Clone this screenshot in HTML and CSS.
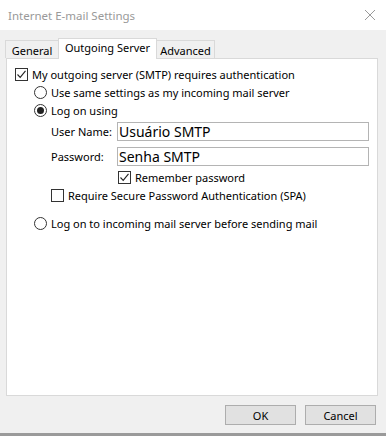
FILE: index.html
```html
<!DOCTYPE html>
<html>
<head>
<meta charset="utf-8">
<link rel="stylesheet" href="styles.css">
</head>
<body>
<div class="window">
  <div class="titlebar">
    <span class="title">Internet E-mail Settings</span>
    <svg class="close" width="12" height="12" viewBox="0 0 12 12"><path d="M1 1 L11 11 M11 1 L1 11" stroke="#9a9a9a" stroke-width="1" fill="none"/></svg>
  </div>
  <div class="body">
    <div class="tabs">
      <div class="tab t-general">General</div>
      <div class="tab active">Outgoing Server</div>
      <div class="tab t-adv">Advanced</div>
    </div>
    <div class="panel">
      <div class="row lvl0">
        <span class="check on"><svg width="11" height="11" viewBox="0 0 11 11"><path d="M1.5 5.5 L4.2 8.3 L9.5 1.8" stroke="#222" stroke-width="1.1" fill="none"/></svg></span>
        <span>My outgoing server (SMTP) requires authentication</span>
      </div>
      <div class="row lvl1">
        <span class="radio"></span>
        <span>Use same settings as my incoming mail server</span>
      </div>
      <div class="row lvl1">
        <span class="radio on"></span>
        <span>Log on using</span>
      </div>
      <div class="field f1">
        <label>User Name:</label>
        <div class="input">Usuário SMTP</div>
      </div>
      <div class="field f2">
        <label>Password:</label>
        <div class="input">Senha SMTP</div>
      </div>
      <div class="row remember">
        <span class="check on"><svg width="11" height="11" viewBox="0 0 11 11"><path d="M1.5 5.5 L4.2 8.3 L9.5 1.8" stroke="#222" stroke-width="1.1" fill="none"/></svg></span>
        <span>Remember password</span>
      </div>
      <div class="row spa">
        <span class="check"></span>
        <span>Require Secure Password Authentication (SPA)</span>
      </div>
      <div class="row lvl1 last">
        <span class="radio"></span>
        <span>Log on to incoming mail server before sending mail</span>
      </div>
    </div>
    <div class="buttons">
      <div class="btn">OK</div>
      <div class="btn">Cancel</div>
    </div>
    <div class="strip"></div>
  </div>
</div>
</body>
</html>
```
FILE: styles.css
```css
html, body {
  margin: 0;
  padding: 0;
}
body {
  width: 386px;
  height: 436px;
  overflow: hidden;
  font-family: "Noto Sans", "DejaVu Sans", sans-serif;
  font-size: 11px;
  color: #000;
  background: #f0f0f0;
}
.window {
  width: 386px;
  height: 436px;
  display: flex;
  flex-direction: column;
}
.titlebar {
  height: 30px;
  background: #fff;
  display: flex;
  align-items: center;
  justify-content: space-between;
  padding: 0 10px 0 8px;
  box-sizing: border-box;
}
.title {
  color: #999;
  font-size: 11.5px;
}
.close {
  display: block;
}
.body {
  flex: 1;
  display: flex;
  flex-direction: column;
  background: #f0f0f0;
}
.tabs {
  display: flex;
  align-items: flex-end;
  padding: 7px 0 0 5px;
  height: 28px;
  box-sizing: border-box;
  position: relative;
  z-index: 1;
}
.tab {
  height: 18px;
  line-height: 19px;
  border: 1px solid #d9d9d9;
  border-bottom: none;
  background: #f0f0f0;
  box-sizing: border-box;
  text-align: center;
}
.t-general {
  width: 53px;
  border-right: none;
}
.t-adv {
  width: 58px;
  border-left: none;
}
.tab.active {
  width: 99px;
  height: 21px;
  line-height: 18px;
  background: #fff;
  margin-bottom: -1px;
}
.panel {
  margin: 0 8px 0 6px;
  height: 338px;
  background: #fff;
  border: 1px solid #d9d9d9;
  box-sizing: border-box;
  padding-top: 9px;
}
.row {
  display: flex;
  align-items: center;
  height: 13px;
  gap: 4px;
  white-space: nowrap;
}
.lvl0 { padding-left: 8px; }
.lvl1 { padding-left: 27px; margin-top: 5px; }
.check {
  width: 13px;
  height: 13px;
  box-sizing: border-box;
  border: 1px solid #333;
  background: #fff;
  display: flex;
  align-items: center;
  justify-content: center;
  flex: none;
}
.check svg { display: block; }
.radio {
  width: 13px;
  height: 13px;
  box-sizing: border-box;
  border: 1px solid #333;
  border-radius: 50%;
  background: #fff;
  position: relative;
  flex: none;
}
.radio.on::after {
  content: "";
  position: absolute;
  left: 2px;
  top: 2px;
  width: 7px;
  height: 7px;
  border-radius: 50%;
  background: #222;
}
.field {
  display: flex;
  align-items: center;
  padding-left: 44px;
  padding-right: 8px;
  white-space: nowrap;
}
.f1 { margin-top: 5px; }
.f2 { margin-top: 6px; }
.field label {
  width: 66px;
  flex: none;
}
.input {
  flex: 1;
  height: 19px;
  box-sizing: border-box;
  border: 1px solid #b4b4b4;
  font-size: 14px;
  line-height: 18px;
  padding-left: 1px;
  overflow: hidden;
  white-space: nowrap;
}
.remember {
  padding-left: 111px;
  margin-top: 5px;
}
.spa {
  padding-left: 44px;
  margin-top: 5px;
}
.row.last { margin-top: 15px; }
.buttons {
  display: flex;
  justify-content: flex-end;
  gap: 9px;
  padding: 9px 10px 0 0;
  height: 28px;
  box-sizing: border-box;
}
.btn {
  width: 71px;
  height: 20px;
  box-sizing: border-box;
  border: 1px solid #adadad;
  background: #e1e1e1;
  display: flex;
  align-items: center;
  justify-content: center;
}
.strip {
  margin-top: auto;
  height: 3px;
  background: #9a9a9a;
}
```
